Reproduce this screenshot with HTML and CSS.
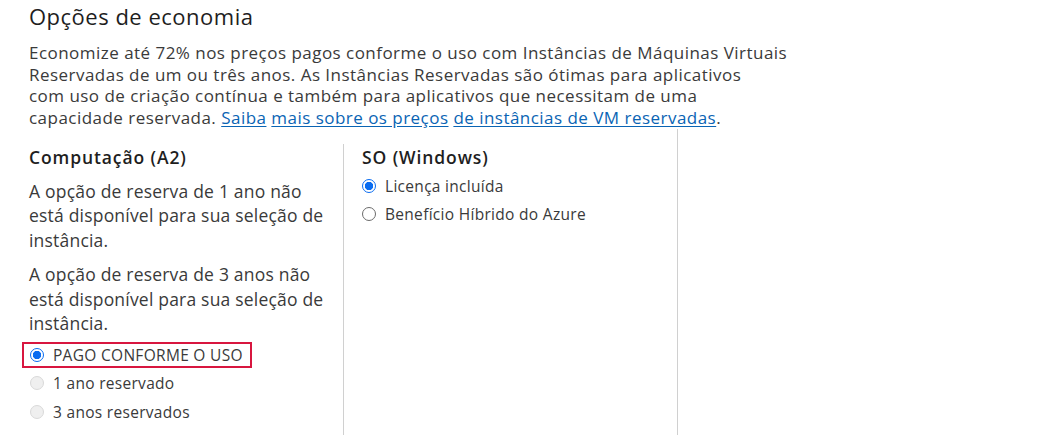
FILE: index.html
```html
<!DOCTYPE html>
<html lang="pt-BR">
<head>
<meta charset="utf-8">
<title>Opções de economia</title>
<link rel="stylesheet" href="styles.css">
</head>
<body>
<div class="page">
  <h1 class="title">Opções de economia</h1>
  <p class="intro">Economize até 72% nos preços pagos conforme o uso com Instâncias de Máquinas Virtuais<br>Reservadas de um ou três anos. As Instâncias Reservadas são ótimas para aplicativos<br>com uso de criação contínua e também para aplicativos que necessitam de uma<br>capacidade reservada. <a href="#">Saiba</a> <a href="#">mais sobre os preços</a> <a href="#">de instâncias de VM reservadas</a>.</p>
  <div class="columns">
    <section class="col col-compute">
      <h2 class="col-title">Computação (A2)</h2>
      <p class="note">A opção de reserva de 1 ano não<br>está disponível para sua seleção de<br>instância.</p>
      <p class="note">A opção de reserva de 3 anos não<br>está disponível para sua seleção de<br>instância.</p>
      <div class="radios radios-compute">
        <label class="radio highlighted"><span class="dot checked"></span>PAGO CONFORME O USO</label>
        <label class="radio"><span class="dot disabled"></span>1 ano reservado</label>
        <label class="radio"><span class="dot disabled"></span>3 anos reservados</label>
      </div>
    </section>
    <section class="col col-os">
      <h2 class="col-title">SO (Windows)</h2>
      <div class="radios radios-os">
        <label class="radio"><span class="dot checked"></span>Licença incluída</label>
        <label class="radio"><span class="dot"></span>Benefício Híbrido do Azure</label>
      </div>
    </section>
    <section class="col col-empty"></section>
  </div>
</div>
</body>
</html>
```
FILE: styles.css
```css
html, body {
  margin: 0;
  padding: 0;
  background: #fff;
}
body {
  font-family: "Open Sans", "Noto Sans", sans-serif;
  color: #383838;
  overflow: hidden;
  height: 435px;
}
.page {
  padding: 2px 0 0 29px;
}
.title {
  margin: 0;
  font-size: 22px;
  font-weight: 400;
  line-height: 28px;
  letter-spacing: 0.5px;
  color: #1e1e1e;
}
.intro {
  margin: 12px 0 0;
  font-size: 17px;
  line-height: 21.7px;
  letter-spacing: 0.47px;
  color: #3a3a3a;
}
.intro a {
  color: #0a64b4;
  text-decoration: underline;
  text-underline-offset: 2px;
}
.columns {
  display: grid;
  grid-template-columns: 314px 334px 334px;
  margin-top: 0;
  height: 320px;
}
.col-os {
  border-left: 1px solid #d0d0d0;
  padding-left: 18px;
  margin-top: 15px;
}
.col-empty {
  border-left: 1px solid #d0d0d0;
}
.col-compute {
  padding-top: 16px;
}
.col-title {
  margin: 0;
  font-size: 17.5px;
  font-weight: 600;
  line-height: 24px;
  letter-spacing: 0.9px;
  color: #1e1e1e;
}
.col-os .col-title {
  margin-top: 1px;
}
.note {
  margin: 10px 0 0;
  font-size: 17.5px;
  line-height: 24.5px;
  letter-spacing: 0.2px;
  color: #3a3a3a;
}
.note + .note {
  margin-top: 10px;
}
.radios {
  display: flex;
  flex-direction: column;
}
.radios-compute {
  margin-top: 6px;
  margin-left: -7px;
  gap: 2.5px;
}
.radios-os {
  margin-top: 5px;
  gap: 4px;
}
.radio {
  display: flex;
  align-items: center;
  gap: 9px;
  font-size: 15.5px;
  line-height: 24px;
  letter-spacing: 0.3px;
  color: #3a3a3a;
  align-self: flex-start;
}
.radios-compute .radio {
  line-height: 22px;
  padding: 0 7px 0 6px;
  border: 2px solid transparent;
}
.radio.highlighted {
  border-color: #d8163f;
}
.dot {
  width: 14px;
  height: 14px;
  box-sizing: border-box;
  border-radius: 50%;
  border: 1px solid #6b6b6b;
  background: #fff;
  flex: none;
}
.dot.checked {
  border: 1px solid #0a6cf0;
  background: radial-gradient(circle, #0a6cf0 0 3.9px, #fff 4.5px);
}
.dot.disabled {
  border-color: #d9d9d9;
  background: #efefef;
}
```
